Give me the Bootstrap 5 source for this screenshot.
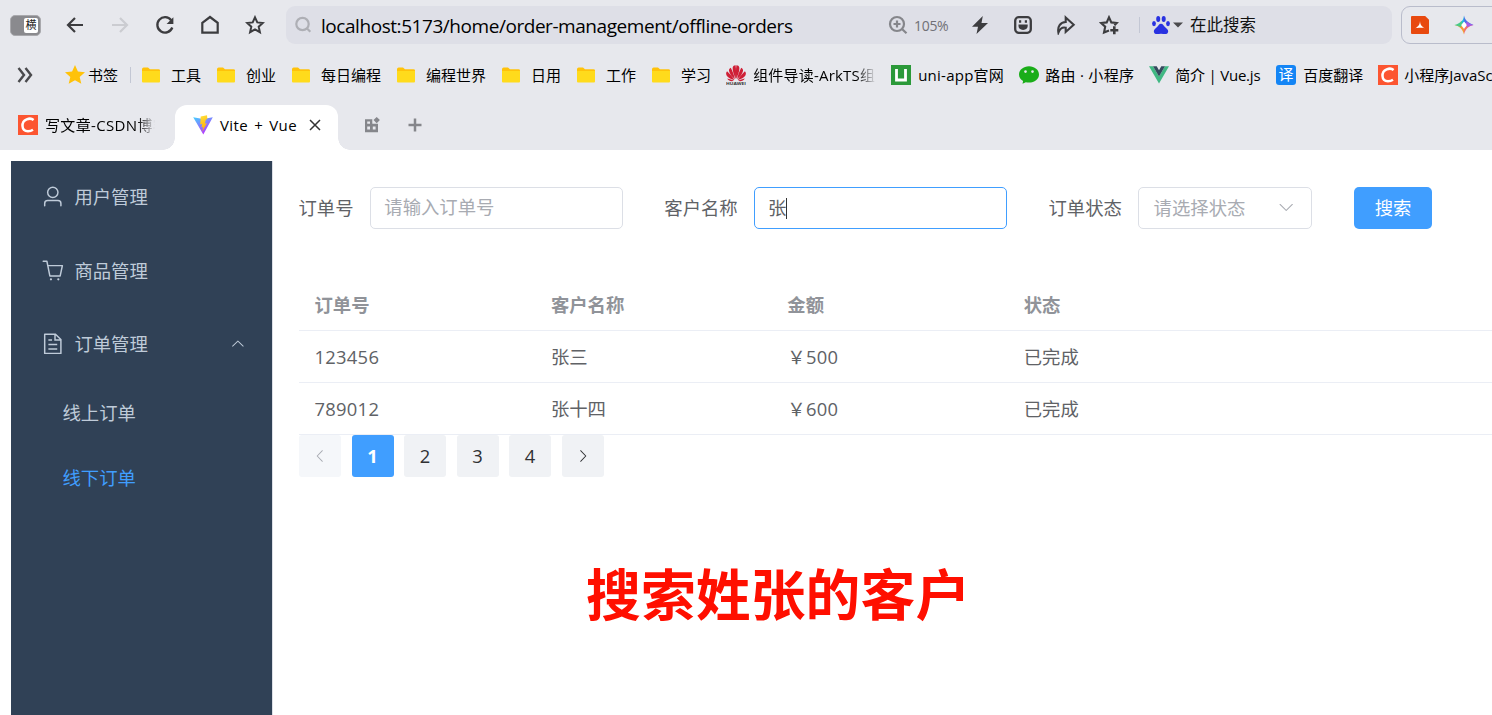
<!DOCTYPE html>
<html lang="zh-CN">
<head>
<meta charset="utf-8">
<meta name="viewport" content="width=device-width, initial-scale=1">
<title>Vite + Vue</title>
<link href="https://cdn.jsdelivr.net/npm/bootstrap@5.3.0/dist/css/bootstrap.min.css" rel="stylesheet">
<style>
  body { font-family: "Open Sans", "Noto Sans CJK SC", sans-serif; color: #606266; background: #fff; height: 715px; overflow: hidden; }
  svg { display: block; flex: none; }
  .chrome { background: #e7e8ed; color: #111; height: 150px; }
  .chrome .tool-row, .chrome .mark-row { height: 50px; }
  .tool-row { padding-left: 10px; }
  .tool-row > svg { width: 20px; height: 20px; margin-right: 25px; }
  .mode-switch { width: 31px; height: 21px; border: 1px solid #a9a9ad; border-radius: 5px; background: #8a8a8e; margin-right: 24px; padding: 3px 2px 3px 13px; }
  .mode-switch span { background: #fff; width: 15px; height: 15px; font-size: 11px; line-height: 14px; color: #222; border-radius: 2px; text-align: center; }
  .address { width: 1106px; height: 38px; background: #dedfe7; border-radius: 9px; margin-left: -4px; padding-left: 7px; flex: none; }
  .url { width: 567px; font-size: 19px; letter-spacing: -.445px; color: #000; line-height: 34px; padding-top: 2px; }
  .zoom-text { font-size: 14px; color: #707076; width: 35px; margin: 0 21px 0 6px; letter-spacing: -.3px; }
  .address .act { width: 20px; height: 20px; margin-right: 23px; }
  .address .find { font-size: 16.5px; color: #111; margin-left: 7px; }
  .address .vline { margin-left: -3px; margin-right: 11px; }
  .address .tri { margin-left: 2px; }
  .vline { width: 1px; height: 16px; background: #c3c7d4; flex: none; }
  .ext-box { height: 38px; width: 110px; border: 1px solid #b9bccb; border-radius: 9px; margin-left: 9px; padding-left: 9px; gap: 25px; flex: none; }
  .mark-row { font-size: 15px; padding-left: 16px; }
  .mark-row .more { margin-right: 29px; }
  .mark-row .vline { margin-right: 10px; }
  .bm { height: 24px; margin-right: 15px; flex: none; line-height: 24px; gap: 7px; }
  .bm svg { width: 20px; height: 20px; }
  .bm.folder { gap: 10px; }
  .bm.starred { gap: 3px; margin-right: 12px; }
  .bm.tight { gap: 6px; }
  .bm span { color: #000; }
  .w-uni { width: 86px; letter-spacing: .25px; } .w-route { width: 89px; letter-spacing: .3px; } .w-vue { width: 86px; letter-spacing: -.2px; }
  .w-ark { width: 123px; letter-spacing: .2px; }
  .fade-end { overflow: hidden; -webkit-mask-image: linear-gradient(90deg, #000 84%, transparent); mask-image: linear-gradient(90deg, #000 84%, transparent); }
  .yi { width: 20px; height: 20px; border-radius: 3px; background: #1485f5; color: #fff !important; font-size: 15px; line-height: 19px; text-align: center; }
  .tab-row { height: 50px; padding-top: 5px; font-size: 15px; color: #000; }
  .tab-idle { width: 175px; padding: 0 20px 5px 18px; gap: 7px; }
  .tab-idle .fade-end { width: 113px; letter-spacing: .35px; }
  .tab-live { width: 163px; height: 45px; background: #fff; border-radius: 12px 12px 0 0; padding: 0 17px 5px 18px; position: relative; }
  .tab-live::before, .tab-live::after { content: ""; position: absolute; bottom: 0; width: 12px; height: 12px; }
  .tab-live::before { left: -12px; background: radial-gradient(circle at 0 0, transparent 11.5px, #fff 12px); }
  .tab-live::after { right: -12px; background: radial-gradient(circle at 100% 0, transparent 11.5px, #fff 12px); }
  .tab-live span { margin-left: 7px; word-spacing: 1.8px; letter-spacing: .4px; white-space: nowrap; }
  .tab-grid { margin: 12px 0 0 26px; }
  .tab-add { margin: 13px 0 0 28px; }
  .page { font-size: 18.375px; padding: 11px 0 0 11px; height: 565px; }
  .side { width: 262px; background: #304156; color: #bfcbd9; border-right: 1px solid #dcdfe6; flex: none; }
  .side .item { height: 73.4px; padding: 0 26px 1.500px 29.5px; }
  .side .item svg { width: 23.6px; height: 23.6px; margin-right: 10.3px; }
  .side .item svg.caret { width: 15.75px; height: 15.75px; margin: 0 0 0 auto; }
  .side .sub { height: 65.6px; padding: 0 0 3px 51.5px; }
  .side .on { color: #409eff; }
  .content-pane { padding: 26px 0 0 26px; }
  .query { height: 42px; gap: 42px; }
  .query label { margin-right: 16.2px; margin-left: -.5px; white-space: nowrap; line-height: 42px; }
  .field { width: 253px; height: 42px; border: 1px solid #dcdfe6; border-radius: 5px; padding: 0 13.500px; color: #a8abb2; line-height: 38px; }
  .field.focus { border-color: #409eff; color: #606266; padding-left: 13px; }
  .field.pick { width: 174px; padding: 0 16px 1px 14.5px; }
  .field .cursor { width: 1px; height: 21px; background: #333; }
  .btn-find { width: 78px; height: 42px; background: #409eff; color: #fff; font-size: 18.375px; border: 0; border-radius: 5px; padding: 0; line-height: 40px; }
  .orders { margin: 49px 0 0; table-layout: fixed; width: 1246px; color: #606266; --bs-table-bg: transparent; }
  .orders th, .orders td { height: 52.2px; padding: 1px 15.500px 0; border-bottom: 1px solid #ebeef5; color: #606266; vertical-align: middle; line-height: 30px; }
  .orders th { color: #909399; font-weight: 700; padding-top: 2px; }
  .orders .cw { width: 236.4px; }
  .orders .num { letter-spacing: .28px; }
  .pager { gap: 10.5px; }
  .pager span { width: 42px; height: 42px; background: #f0f2f5; color: #303133; border-radius: 3px; }
  .pager .off { background: #f5f7fa; color: #a8abb2; }
  .pager .cur { background: #409eff; color: #fff; font-weight: 700; }
  .note { margin: 72px 0 0 287px; color: #ff0f00; font-size: 54.8px; letter-spacing: .1px; font-weight: 700; line-height: 90px; white-space: nowrap; }
</style>
</head>
<body>
<svg width="0" height="0" class="position-absolute">
  <symbol id="folder" viewBox="0 0 20 20"><path d="M1 4.200Q1 2.500 2.700 2.500H7l2 1.700h8.500Q19 4.200 19 5.600V10H1z" fill="#ffc20a"/><path d="M1 6h18v10.500q0 1-1 1H2q-1 0-1-1z" fill="#ffdb1c"/></symbol>
  <symbol id="csdn" viewBox="0 0 20 20"><path d="M0 0h20v20H0z" fill="#fc5531"/><path d="M15.600 4.900C13.800 3.500 11 3.400 8.700 4.300 5.800 5.500 4.300 8 4.500 11c.2 3.500 2.500 5.200 5.500 5.200 2 0 3.600-.5 5-1.400" fill="none" stroke="#fff" stroke-width="2.500"/></symbol>
  <symbol id="down" viewBox="0 0 1024 1024"><path fill="currentColor" d="M831.872 340.864 512 652.672 192.128 340.864a30.592 30.592 0 0 0-42.752 0 29.120 29.120 0 0 0 0 41.600L489.664 714.240a32 32 0 0 0 44.672 0l340.288-331.712a29.120 29.120 0 0 0 0-41.728 30.592 30.592 0 0 0-42.752 0z"/></symbol>
</svg>

<header class="chrome">
  <div class="tool-row d-flex align-items-center">
    <div class="mode-switch d-flex align-items-center flex-shrink-0"><span>横</span></div>
    <svg viewBox="0 0 20 20" fill="none" stroke="#3c3c3f" stroke-width="2.200"><path d="M18 10H3.500M10 3 3 10l7 7"/></svg>
    <svg viewBox="0 0 20 20" fill="none" stroke="#cbccd1" stroke-width="2.200"><path d="M2 10h14.500M10 3l7 7-7 7"/></svg>
    <svg viewBox="0 0 20 20" fill="none" stroke="#3c3c3f" stroke-width="2.300"><path d="M17.300 12.500A7.700 7.700 0 1 1 16.200 5.200"/><path d="M18.400 2.200v6.800h-6.800z" fill="#3c3c3f" stroke="none"/></svg>
    <svg viewBox="0 0 20 20" fill="none" stroke="#3c3c3f" stroke-width="2.200"><path d="M2.300 7.800 10 2l7.700 5.800v9.900H2.300z"/></svg>
    <svg viewBox="0 0 20 20" fill="none" stroke="#3c3c3f" stroke-width="2"><path d="m10 2.300 2.300 5.100 5.500.6-4.100 3.700 1.200 5.500L10 14.400l-4.900 2.800 1.200-5.500L2.200 8l5.500-.6z"/></svg>
    <div class="address d-flex align-items-center">
      <svg width="20" height="20" viewBox="0 0 20 20" fill="none" stroke="#aeafb5" stroke-width="2.200"><circle cx="9.500" cy="9" r="6.200"/><path d="m14 13.500 3.300 3.300"/></svg>
      <span class="url text-nowrap ms-2 flex-shrink-0">localhost:5173/home/order-management/offline-orders</span>
      <svg width="20" height="20" viewBox="0 0 20 20" fill="none" stroke="#85868b" stroke-width="2.200"><circle cx="9" cy="9" r="7"/><path d="m14 14 4.500 4.300M5.500 9h7M9 5.500v7"/></svg>
      <span class="zoom-text">105%</span>
      <svg class="act" viewBox="0 0 20 20"><path d="M12.800 1 2 11.700h6L6.500 19 18 8h-6.500z" fill="#3c3c3f"/></svg>
      <svg class="act" viewBox="0 0 20 20"><rect x="2.200" y="2.200" width="15.600" height="15.600" rx="3.500" fill="none" stroke="#3c3c3f" stroke-width="2.300"/><path d="M5.500 9.600h9.200v1.500c0 2.300-1.600 3.900-4.600 3.900s-4.600-1.600-4.600-3.900zM6 5.200h2.200v2.500H6zM11.800 5.200H14v2.500h-2.200z" fill="#3c3c3f"/></svg>
      <svg class="act" viewBox="0 0 20 20" fill="none" stroke="#3c3c3f" stroke-width="2.100"><path d="M9.700 2.500 17.700 9.800l-8 7.200v-4.300C6.500 12 4 13.500 2.400 17.500 1.300 11.500 4.300 7.300 9.700 7z"/></svg>
      <svg class="act" viewBox="0 0 20 20" fill="none" stroke="#3c3c3f" stroke-width="2.100"><path d="M10 15.500 5 17.500l1.200-5.800L2.200 8l5.500-.6L10 2.300l2.300 5.100 5.500.6-2.400 2.300"/><path d="M15.300 11.300v8M11.300 15.300h8" stroke-width="2.600"/></svg>
      <span class="vline"></span>
      <svg width="20" height="20" viewBox="0 0 20 20" fill="#2932e1"><ellipse cx="7.200" cy="4" rx="2" ry="2.900"/><ellipse cx="12.700" cy="4" rx="2" ry="2.900"/><ellipse cx="3" cy="8.600" rx="1.900" ry="2.600"/><ellipse cx="17" cy="8.600" rx="1.900" ry="2.600"/><path d="M10 8.700c2 0 2.500 2 4.500 3.700 2.500 2 3 3.300 2.500 4.800-1 2.700-3.700 1.500-7 1.500s-6 1.200-7-1.500c-.5-1.500 0-2.800 2.500-4.800C7.500 10.700 8 8.700 10 8.700z"/></svg>
      <svg class="tri" width="10" height="6" viewBox="0 0 10 6"><path d="M0 .5h10L5 5.500z" fill="#4a4a4d"/></svg>
      <span class="find">在此搜索</span>
    </div>
    <div class="ext-box d-flex align-items-center">
      <svg width="18" height="18" viewBox="0 0 19 19"><path d="M0 1q0-1 1-1h14l4 4v14q0 1-1 1H1q-1 0-1-1z" fill="#e8490f"/><path d="M9.500 5c.2 3.500 1 5.500 5 8-2.500-.8-7.500-.8-10 0 4-2.500 4.800-4.500 5-8z" fill="#fff"/></svg>
      <svg width="20" height="20" viewBox="0 0 20 20"><path d="M10 .5C9.500 4.500 8 6.500 6.800 7l.7 3L10 7z" fill="#25b5df"/><path d="M10 .5C11 5 13.500 7.500 19.500 10H13l-3-3.500z" fill="#4b72e8"/><path d="M19.500 10C14 11.500 11.500 14 10 19.500V14l3-4z" fill="#f2726c"/><path d="M.5 10C6 11.500 8.500 14 10 19.500V14l-3-4z" fill="#f49b35"/><path d="M.5 10C4 9 6 8 7.500 5.800L8.500 9 6.500 12.300C5 11.200 3 10.500.5 10z" fill="#48cc88"/><path d="M19.500 10C16 9 14.500 8.300 13 6.500L11.500 9l2 3.300c1.500-1.100 3.500-1.800 6-2.300z" fill="#a75be5"/><path d="m10 6.800 2.800 3.200-2.800 3.200L7.200 10z" fill="#fff"/></svg>
    </div>
  </div>

  <nav class="mark-row d-flex align-items-center text-nowrap">
    <svg class="more" width="20" height="20" viewBox="0 0 20 20" fill="none" stroke="#4a4a4d" stroke-width="2.400"><path d="m2.500 3 5.500 7-5.500 7M9.500 3l5.500 7-5.500 7"/></svg>
    <div class="bm starred d-flex align-items-center"><svg viewBox="0 0 20 20"><path d="m10 0 2.900 6.500 7.100.7-5.300 4.700 1.600 6.900L10 15.200l-6.300 3.600 1.600-6.900L0 7.200l7.100-.7z" fill="#ffc20a"/></svg><span>书签</span></div>
    <span class="vline"></span>
    <div class="bm folder d-flex align-items-center"><svg><use href="#folder"/></svg><span>工具</span></div>
    <div class="bm folder d-flex align-items-center"><svg><use href="#folder"/></svg><span>创业</span></div>
    <div class="bm folder d-flex align-items-center"><svg><use href="#folder"/></svg><span>每日编程</span></div>
    <div class="bm folder d-flex align-items-center"><svg><use href="#folder"/></svg><span>编程世界</span></div>
    <div class="bm folder d-flex align-items-center"><svg><use href="#folder"/></svg><span>日用</span></div>
    <div class="bm folder d-flex align-items-center"><svg><use href="#folder"/></svg><span>工作</span></div>
    <div class="bm folder d-flex align-items-center"><svg><use href="#folder"/></svg><span>学习</span></div>
    <div class="bm d-flex align-items-center"><svg viewBox="0 0 20 20"><g fill="#cf1f36"><path d="M9.700 14C8 10 6.300 6 6.700 2.500 7 .8 8.500 0 9.600.2c.6 4 .5 9 .1 13.800z"/><path d="M8.900 14.200C6 12 3.500 8.500 3 6c-.2-1.700.7-2.800 1.800-3.300C6.500 6 8.200 10.500 8.900 14.200zM8.400 15C5 14.500 1.500 12.500.5 10.300-.3 8.500.2 7 1.100 6.200 4 9 7 12.500 8.400 15zM8 15.800c-2.500.8-5.500.3-6.800-2.300C3.800 14.200 6 15 8 15.800z"/><path d="M10.300 14C12 10 13.700 6 13.300 2.500 13 .8 11.500 0 10.400.2c-.6 4-.5 9-.1 13.800zM11.100 14.200C14 12 16.500 8.500 17 6c.2-1.700-.7-2.800-1.800-3.300-1.700 3.300-3.400 7.800-4.100 11.500zM11.600 15c3.400-.5 6.900-2.500 7.900-4.700.8-1.800.3-3.300-.6-4.100C16 9 13 12.500 11.600 15zM12 15.800c2.500.8 5.500.3 6.800-2.300-2.600.7-4.800 1.500-6.800 2.300z"/></g><text x="0" y="20" font-size="4.200" font-weight="700" textLength="20" lengthAdjust="spacingAndGlyphs" fill="#333">HUAWEI</text></svg><span class="w-ark fade-end">组件导读-ArkTS组</span></div>
    <div class="bm d-flex align-items-center"><svg viewBox="0 0 20 20"><path d="M0 0h20v20H0z" fill="#2b9939"/><path d="M5.500 4v11h9V4" fill="none" stroke="#fff" stroke-width="2.800"/></svg><span class="w-uni">uni-app官网</span></div>
    <div class="bm tight d-flex align-items-center"><svg viewBox="0 0 20 20"><path d="M10 1.300c5.600 0 10 3.600 10 8.200s-4.400 8.100-10 8.100c-1.200 0-2.200-.1-3.200-.4L3.500 18.700l.6-2.700C1.600 14.500 0 12.100 0 9.500c0-4.600 4.400-8.200 10-8.200z" fill="#1aad19"/><circle cx="6.500" cy="6.600" r="1.300" fill="#e7e8ed"/><circle cx="13.500" cy="6.600" r="1.300" fill="#e7e8ed"/></svg><span class="w-route">路由 · 小程序</span></div>
    <div class="bm tight d-flex align-items-center"><svg viewBox="0 0 20 20"><path d="M0 1.300h4L10 11.500 16 1.300h4L10 18.600z" fill="#41b883"/><path d="M4 1.300h3.700L10 5.200l2.300-3.900H16L10 11.500z" fill="#35495e"/></svg><span class="w-vue">简介 | Vue.js</span></div>
    <div class="bm d-flex align-items-center"><span class="yi">译</span><span>百度翻译</span></div>
    <div class="bm tight d-flex align-items-center"><svg><use href="#csdn"/></svg><span>小程序JavaSc</span></div>
  </nav>

  <div class="tab-row d-flex">
    <div class="tab-idle d-flex align-items-center text-nowrap"><svg width="20" height="20"><use href="#csdn"/></svg><span class="fade-end">写文章-CSDN博客</span></div>
    <div class="tab-live d-flex align-items-center">
      <svg width="20" height="20" viewBox="0 0 20 20"><defs><linearGradient id="va" x1="0" y1="0" x2=".6" y2="1"><stop offset="0" stop-color="#41d1ff"/><stop offset="1" stop-color="#bd34fe"/></linearGradient><linearGradient id="vb" x1=".4" y1="0" x2=".6" y2="1"><stop offset="0" stop-color="#ffdd35"/><stop offset="1" stop-color="#ffa800"/></linearGradient></defs><path d="m.2 2.200 9.800 1.700 9.800-1.700L10.300 19.500z" fill="url(#va)"/><path d="m14 .3-6.300 1.200-.5 8 2-.5-.7 3.500 1.700-.5-1 4.700 4.700-8.500-2 .3 1-4 1.500-.3z" fill="url(#vb)"/></svg>
      <span>Vite + Vue</span>
      <svg width="12" height="12" viewBox="0 0 12 12" stroke="#333" stroke-width="1.500" class="ms-auto"><path d="m1 1 10 10M11 1 1 11"/></svg>
    </div>
    <svg class="tab-grid" width="16" height="16" viewBox="0 0 16 16"><path d="M1 2.200h7.300v4.500H14v8.500H1z" fill="#85868b"/><path d="M3.200 4.600h2.800v2.200H3.200zM3.200 9.500h2.800v3H3.200zM8.800 9.500h2.800v3H8.800z" fill="#e7e8ed"/><path d="m12.700 0 3.200 3.100-3.200 3.100-3.200-3.100z" fill="#85868b"/></svg>
    <svg class="tab-add" width="14" height="14" viewBox="0 0 14 14" stroke="#85868b" stroke-width="2.500"><path d="M7 .5v13M.5 7h13"/></svg>
  </div>
</header>

<div class="page d-flex">
  <aside class="side">
    <div class="item d-flex align-items-center"><svg viewBox="0 0 1024 1024"><path fill="currentColor" d="M512 512a192 192 0 1 0 0-384 192 192 0 0 0 0 384m0 64a256 256 0 1 1 0-512 256 256 0 0 1 0 512m320 320v-96a96 96 0 0 0-96-96H288a96 96 0 0 0-96 96v96a32 32 0 1 1-64 0v-96a160 160 0 0 1 160-160h448a160 160 0 0 1 160 160v96a32 32 0 1 1-64 0"/></svg>用户管理</div>
    <div class="item d-flex align-items-center"><svg viewBox="0 0 1024 1024"><path fill="currentColor" d="M432 928a48 48 0 1 1 0-96 48 48 0 0 1 0 96m320 0a48 48 0 1 1 0-96 48 48 0 0 1 0 96M96 128a32 32 0 0 1 0-64h160a32 32 0 0 1 31.360 25.728L320.640 256H928a32 32 0 0 1 31.296 38.720l-96 448A32 32 0 0 1 832 768H384a32 32 0 0 1-31.360-25.728L229.760 128zm314.240 576h395.904l82.304-384H333.440l76.800 384z"/></svg>商品管理</div>
    <div class="item d-flex align-items-center"><svg viewBox="0 0 1024 1024"><path fill="currentColor" d="M832 384H576V128H192v768h640zm-26.496-64L640 154.496V320zM160 64h480l256 256v608a32 32 0 0 1-32 32H160a32 32 0 0 1-32-32V96a32 32 0 0 1 32-32m160 448h384v64H320zm0-192h160v64H320zm0 384h384v64H320z"/></svg>订单管理<svg class="caret" viewBox="0 0 1024 1024"><use href="#down" width="1024" height="1024" transform="rotate(180 512 512)"/></svg></div>
    <div class="sub d-flex align-items-center">线上订单</div>
    <div class="sub on d-flex align-items-center">线下订单</div>
  </aside>

  <main class="content-pane flex-grow-1 overflow-hidden">
    <form class="query d-flex">
      <div class="d-flex"><label>订单号</label><div class="field">请输入订单号</div></div>
      <div class="d-flex"><label>客户名称</label><div class="field focus d-flex align-items-center">张<span class="cursor"></span></div></div>
      <div class="d-flex"><label>订单状态</label><div class="field pick d-flex align-items-center justify-content-between">请选择状态<svg width="18.400" height="18.400"><use href="#down"/></svg></div></div>
      <button type="button" class="btn btn-find">搜索</button>
    </form>
    <table class="table orders">
      <colgroup><col class="cw"><col class="cw"><col class="cw"><col></colgroup>
      <thead><tr><th>订单号</th><th>客户名称</th><th>金额</th><th>状态</th></tr></thead>
      <tbody>
        <tr><td class="num">123456</td><td>张三</td><td class="num">￥500</td><td>已完成</td></tr>
        <tr><td class="num">789012</td><td>张十四</td><td class="num">￥600</td><td>已完成</td></tr>
      </tbody>
    </table>
    <div class="pager d-flex">
      <span class="off d-flex align-items-center justify-content-center"><svg width="16" height="16"><use href="#down" transform="rotate(90 8 8)"/></svg></span>
      <span class="cur d-flex align-items-center justify-content-center">1</span>
      <span class="d-flex align-items-center justify-content-center">2</span>
      <span class="d-flex align-items-center justify-content-center">3</span>
      <span class="d-flex align-items-center justify-content-center">4</span>
      <span class="d-flex align-items-center justify-content-center"><svg width="16" height="16"><use href="#down" transform="rotate(-90 8 8)"/></svg></span>
    </div>
    <div class="note">搜索姓张的客户</div>
  </main>
</div>
<script src="https://cdn.jsdelivr.net/npm/bootstrap@5.3.0/dist/js/bootstrap.bundle.min.js"></script>
</body>
</html>
